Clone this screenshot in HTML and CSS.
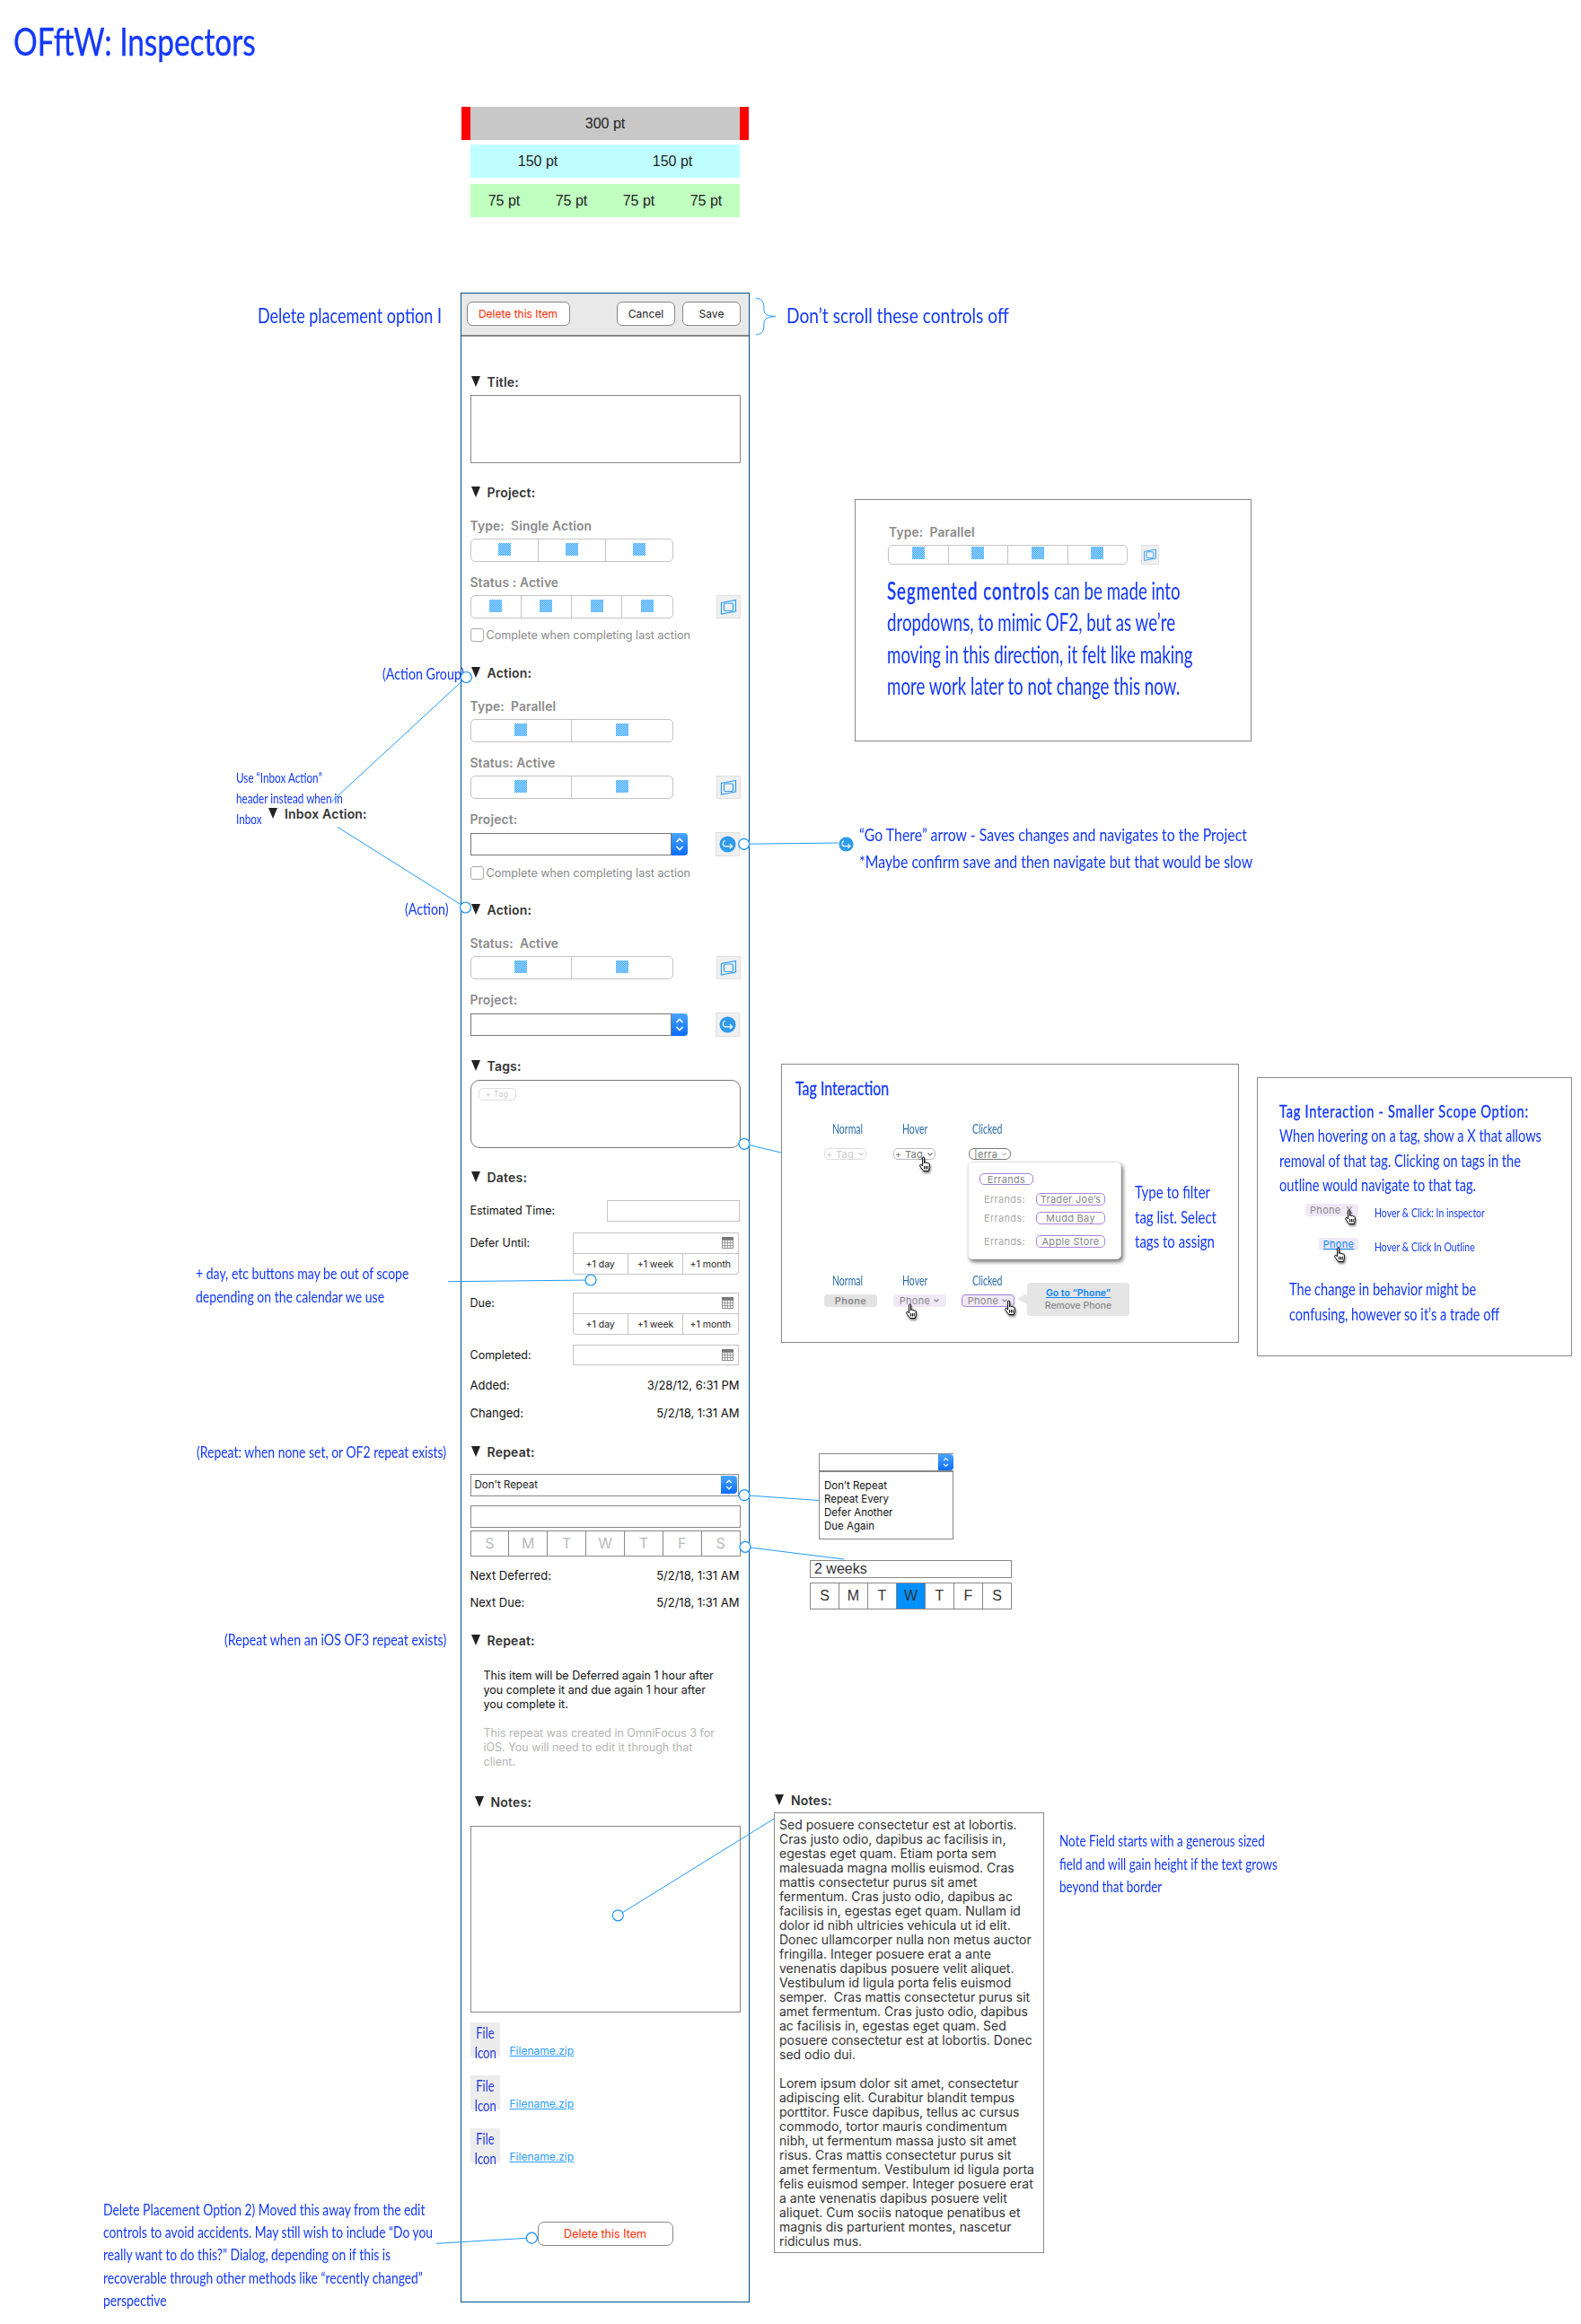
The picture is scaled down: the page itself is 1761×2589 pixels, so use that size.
FILE: index.html
```html
<!DOCTYPE html>
<html lang="en">
<head>
  <meta charset="UTF-8">
  <title>OFftW: Inspectors</title>
  <link rel="stylesheet" href="styles.css">
</head>
<body>
  <svg class="defs" width="0" height="0">
    <symbol id="chevs" viewBox="0 0 18 25">
      <path d="M5.5 10 L9 6.5 L12.5 10 M5.5 15 L9 18.5 L12.5 15" fill="none" stroke="#fff" stroke-width="1.6"/>
    </symbol>
    <symbol id="swap" viewBox="0 0 20 20">
      <path d="M2 5.5 L18 2.5 V15 L2 18 Z" fill="none" stroke="#2c9cf0" stroke-width="1.2"/>
      <rect x="5" y="6" width="10" height="8.5" rx="1.5" fill="none" stroke="#2c9cf0" stroke-width="1.2"/>
    </symbol>
    <symbol id="go" viewBox="0 0 20 20">
      <circle cx="10" cy="10" r="9.5" fill="#2f9bea"/>
      <path d="M7 5.5 C4 6.5 3.5 12 7 12.5 H15.5 M12.5 9.5 L15.5 12.5 L12.5 15" fill="none" stroke="#fff" stroke-width="1.2"/>
    </symbol>
    <symbol id="cal" viewBox="0 0 13 13">
      <rect x="0" y="0" width="13" height="13" fill="#777"/>
      <path d="M.5 3.5 H12.5 V12.5 H.5 Z M.5 6.5 H12.5 M.5 9.5 H12.5 M3.5 3.5 V12.5 M6.5 3.5 V12.5 M9.5 3.5 V12.5" fill="#fff" stroke="#888" stroke-width=".8"/>
    </symbol>
    <symbol id="chev" viewBox="0 0 8 6">
      <path d="M1.5 1.5 L4 4 L6.5 1.5" fill="none" stroke="currentColor" stroke-width="1.1"/>
    </symbol>
    <symbol id="hand" viewBox="0 0 16 19">
      <path d="M5.6 2 C5.6 .6 7.6 .6 7.6 2 V7.6 C7.8 6.6 9.5 6.6 9.6 7.8 C9.8 7 11.3 7 11.4 8.2 C11.7 7.6 13.3 7.8 13.3 9 V12.8 C13.3 14.2 12.6 15 12.3 16.5 H6.6 C6 15 4 13.4 2.8 11.2 C2 9.6 3.6 8.6 4.6 9.8 L5.6 11 Z" fill="#fff" stroke="#000" stroke-width="1"/>
      <path d="M7.6 11 V14.5 M9.4 11 V14.5 M11.2 11 V14.5" stroke="#000" stroke-width="1"/>
    </symbol>
  </svg>

  <div class="canvas">
    <h1 class="hand page-title">OFftW: Inspectors</h1>

    <div class="ruler">
      <div class="ruler-row ruler-300"><span>300 pt</span></div>
      <div class="ruler-row ruler-150"><span>150 pt</span><span>150 pt</span></div>
      <div class="ruler-row ruler-75"><span>75 pt</span><span>75 pt</span><span>75 pt</span><span>75 pt</span></div>
    </div>

    <!-- Inspector panel -->
    <div class="inspector">
      <div class="toolbar">
        <button class="btn btn-delete">Delete this Item</button>
        <button class="btn btn-cancel">Cancel</button>
        <button class="btn btn-save">Save</button>
      </div>

      <div class="head m44"><i class="tri"></i>Title:</div>
      <div class="field title-field m5"></div>

      <div class="head m26"><i class="tri"></i>Project:</div>
      <div class="label m20">Type:  Single Action</div>
      <div class="seg m6"><span><b></b></span><span><b></b></span><span><b></b></span></div>
      <div class="label m15">Status : Active</div>
      <div class="seg-row m6">
        <div class="seg"><span><b></b></span><span><b></b></span><span><b></b></span><span><b></b></span></div>
        <div class="icon-btn"><svg><use href="#swap"/></svg></div>
      </div>
      <div class="check-row m11"><i class="check"></i>Complete when completing last action</div>

      <div class="head m28"><i class="tri"></i>Action:</div>
      <div class="label m20">Type:  Parallel</div>
      <div class="seg m6"><span><b></b></span><span><b></b></span></div>
      <div class="label m15">Status: Active</div>
      <div class="seg-row m6">
        <div class="seg"><span><b></b></span><span><b></b></span></div>
        <div class="icon-btn"><svg><use href="#swap"/></svg></div>
      </div>
      <div class="label m15">Project:</div>
      <div class="seg-row m7">
        <div class="select"><span class="stepper"><svg><use href="#chevs"/></svg></span></div>
        <div class="icon-btn go-btn"><svg><use href="#go"/></svg></div>
      </div>
      <div class="check-row m11"><i class="check"></i>Complete when completing last action</div>

      <div class="head m27"><i class="tri"></i>Action:</div>
      <div class="label m20">Status:  Active</div>
      <div class="seg-row m6">
        <div class="seg"><span><b></b></span><span><b></b></span></div>
        <div class="icon-btn"><svg><use href="#swap"/></svg></div>
      </div>
      <div class="label m15">Project:</div>
      <div class="seg-row m7">
        <div class="select"><span class="stepper"><svg><use href="#chevs"/></svg></span></div>
        <div class="icon-btn go-btn"><svg><use href="#go"/></svg></div>
      </div>

      <div class="head m26"><i class="tri"></i>Tags:</div>
      <div class="tags-field m6"><span class="pill pill-faint pill-small">+ Tag</span></div>

      <div class="head m26"><i class="tri"></i>Dates:</div>
      <div class="date-row m16">
        <span class="date-label">Estimated Time:</span>
        <div class="est-field"></div>
      </div>
      <div class="date-row m12">
        <span class="date-label">Defer Until:</span>
        <div class="date-box">
          <div class="date-input"><svg class="cal"><use href="#cal"/></svg></div>
          <div class="quick"><span>+1 day</span><span>+1 week</span><span>+1 month</span></div>
        </div>
      </div>
      <div class="date-row m20">
        <span class="date-label">Due:</span>
        <div class="date-box">
          <div class="date-input"><svg class="cal"><use href="#cal"/></svg></div>
          <div class="quick"><span>+1 day</span><span>+1 week</span><span>+1 month</span></div>
        </div>
      </div>
      <div class="date-row m11">
        <span class="date-label">Completed:</span>
        <div class="date-box date-single"><svg class="cal"><use href="#cal"/></svg></div>
      </div>
      <div class="info-row m14"><span>Added:</span><span>3/28/12, 6:31 PM</span></div>
      <div class="info-row m15"><span>Changed:</span><span>5/2/18, 1:31 AM</span></div>

      <div class="head m29"><i class="tri"></i>Repeat:</div>
      <div class="select select-full m15">Don't Repeat<span class="stepper"><svg><use href="#chevs"/></svg></span></div>
      <div class="field plain-field m10"></div>
      <div class="days m3"><span>S</span><span>M</span><span>T</span><span>W</span><span>T</span><span>F</span><span>S</span></div>
      <div class="info-row m13"><span>Next Deferred:</span><span>5/2/18, 1:31 AM</span></div>
      <div class="info-row m14"><span>Next Due:</span><span>5/2/18, 1:31 AM</span></div>

      <div class="head m28"><i class="tri"></i>Repeat:</div>
      <p class="repeat-text m22">This item will be Deferred again 1 hour after<br>you complete it and due again 1 hour after<br>you complete it.</p>
      <p class="repeat-text repeat-muted m16">This repeat was created in OmniFocus 3 for<br>iOS. You will need to edit it through that<br>client.</p>

      <div class="head head-notes m30"><i class="tri"></i>Notes:</div>
      <div class="field notes-field m17"></div>
      <div class="attach m11"><div class="file-icon"><span class="hand">File</span><span class="hand">Icon</span></div><a class="file-link">Filename.zip</a></div>
      <div class="attach m21"><div class="file-icon"><span class="hand">File</span><span class="hand">Icon</span></div><a class="file-link">Filename.zip</a></div>
      <div class="attach m21"><div class="file-icon"><span class="hand">File</span><span class="hand">Icon</span></div><a class="file-link">Filename.zip</a></div>
      <button class="btn btn-delete btn-bottom">Delete this Item</button>
    </div>

    <!-- Side notes -->
    <div class="hand note n-delete1">Delete placement option I</div>
    <div class="hand note n-scroll">Don’t scroll these controls off</div>
    <div class="hand note n-group">(Action Group)</div>
    <div class="hand note n-inbox">Use “Inbox Action”<br>header instead when in<br>Inbox</div>
    <div class="head inbox-head"><i class="tri"></i>Inbox Action:</div>
    <div class="hand note n-action">(Action)</div>
    <div class="hand note n-day">+ day, etc buttons may be out of scope<br>depending on the calendar we use</div>
    <div class="hand note n-repeat1">(Repeat: when none set, or OF2 repeat exists)</div>
    <div class="hand note n-repeat2">(Repeat when an iOS OF3 repeat exists)</div>
    <div class="hand note n-delete2">Delete Placement Option 2) Moved this away from the edit<br>controls to avoid accidents. May still wish to include “Do you<br>really want to do this?” Dialog, depending on if this is<br>recoverable through other methods like “recently changed”<br>perspective</div>
    <svg class="go-there"><use href="#go"/></svg>
    <div class="hand note n-go">“Go There” arrow - Saves changes and navigates to the Project<br>*Maybe confirm save and then navigate but that would be slow</div>
    <div class="hand note n-field">Note Field starts with a generous sized<br>field and will gain height if the text grows<br>beyond that border</div>

    <!-- Segmented controls box -->
    <div class="box seg-box">
      <div class="label">Type:  Parallel</div>
      <div class="seg-row seg-row-wide">
        <div class="seg"><span><b></b></span><span><b></b></span><span><b></b></span><span><b></b></span></div>
        <div class="icon-btn"><svg><use href="#swap"/></svg></div>
      </div>
      <p class="hand seg-note"><strong>Segmented controls</strong> can be made into<br>dropdowns, to mimic OF2, but as we’re<br>moving in this direction, it felt like making<br>more work later to not change this now.</p>
    </div>

    <!-- Tag interaction box -->
    <div class="box tag-box">
      <h3 class="hand tag-title">Tag Interaction</h3>
      <div class="state-row state-row-1"><span class="hand">Normal</span><span class="hand">Hover</span><span class="hand">Clicked</span></div>
      <div class="tag-row">
        <span class="pill pill-faint">+ Tag <svg class="chev"><use href="#chev"/></svg></span>
        <span class="pill pill-hover">+ Tag <svg class="chev"><use href="#chev"/></svg></span>
        <span class="pill pill-typing">|erra <svg class="chev"><use href="#chev"/></svg></span>
      </div>
      <div class="popup-row">
        <div class="popup">
          <span class="pill pill-purple pill-errands">Errands</span>
          <div class="popup-line first"><span class="popup-label">Errands:</span><span class="pill pill-purple">Trader Joe’s</span></div>
          <div class="popup-line"><span class="popup-label">Errands:</span><span class="pill pill-purple">Mudd Bay</span></div>
          <div class="popup-line last"><span class="popup-label">Errands:</span><span class="pill pill-purple">Apple Store</span></div>
        </div>
        <div class="hand filter-note">Type to filter<br>tag list. Select<br>tags to assign</div>
      </div>
      <div class="state-row state-row-2"><span class="hand">Normal</span><span class="hand">Hover</span><span class="hand">Clicked</span></div>
      <div class="phone-row">
        <span class="phone phone-normal">Phone</span>
        <span class="phone phone-hover">Phone <svg class="chev"><use href="#chev"/></svg></span>
        <span class="phone phone-clicked">Phone <svg class="chev"><use href="#chev"/></svg></span>
        <div class="tip"><a>Go to “Phone”</a><span>Remove Phone</span></div>
      </div>
    </div>

    <!-- Smaller scope box -->
    <div class="box scope-box">
      <div class="hand scope-text"><strong>Tag Interaction - Smaller Scope Option:</strong><br>When hovering on a tag, show a X that allows<br>removal of that tag. Clicking on tags in the<br>outline would navigate to that tag.</div>
      <div class="scope-row scope-row-1"><span class="phone phone-x"><span>Phone</span><span>X</span></span><span class="hand">Hover &amp; Click: In inspector</span></div>
      <div class="scope-row scope-row-2"><span class="phone phone-link"><a>Phone</a></span><span class="hand">Hover &amp; Click In Outline</span></div>
      <div class="hand scope-foot">The change in behavior might be<br>confusing, however so it’s a trade off</div>
    </div>

    <!-- Repeat popups -->
    <div class="mini-select"><span class="stepper"><svg><use href="#chevs"/></svg></span></div>
    <div class="mini-list">Don’t Repeat<br>Repeat Every<br>Defer Another<br>Due Again</div>
    <div class="weeks">2 weeks</div>
    <div class="week-days"><span>S</span><span>M</span><span>T</span><span class="on">W</span><span>T</span><span>F</span><span>S</span></div>

    <!-- Notes with text -->
    <div class="head notes-head"><i class="tri"></i>Notes:</div>
    <div class="notes-text">Sed posuere consectetur est at lobortis.
Cras justo odio, dapibus ac facilisis in,
egestas eget quam. Etiam porta sem
malesuada magna mollis euismod. Cras
mattis consectetur purus sit amet
fermentum. Cras justo odio, dapibus ac
facilisis in, egestas eget quam. Nullam id
dolor id nibh ultricies vehicula ut id elit.
Donec ullamcorper nulla non metus auctor
fringilla. Integer posuere erat a ante
venenatis dapibus posuere velit aliquet.
Vestibulum id ligula porta felis euismod
semper.  Cras mattis consectetur purus sit
amet fermentum. Cras justo odio, dapibus
ac facilisis in, egestas eget quam. Sed
posuere consectetur est at lobortis. Donec
sed odio dui.

Lorem ipsum dolor sit amet, consectetur
adipiscing elit. Curabitur blandit tempus
porttitor. Fusce dapibus, tellus ac cursus
commodo, tortor mauris condimentum
nibh, ut fermentum massa justo sit amet
risus. Cras mattis consectetur purus sit
amet fermentum. Vestibulum id ligula porta
felis euismod semper. Integer posuere erat
a ante venenatis dapibus posuere velit
aliquet. Cum sociis natoque penatibus et
magnis dis parturient montes, nascetur
ridiculus mus.</div>

    <!-- Connector lines -->
    <svg class="wires" viewBox="0 0 1761 2589">
      <path d="M842 332 C850 333 851 338 851 345 C851 350 854 352 864 352.5 C854 353 851 356 851 360 C851 368 850 372 842 373"/>
      <path d="M519.3 754.5 L368.6 893.7"/>
      <path d="M375.8 921.3 L518.5 1011"/>
      <path d="M828.7 940.3 L934 939"/>
      <path d="M829 1274.3 L870 1284"/>
      <path d="M499 1427.7 L658 1426"/>
      <path d="M829 1665.7 L912 1671.5"/>
      <path d="M830 1723.3 L940 1737"/>
      <path d="M688.3 2133.8 L862.3 2026"/>
      <path d="M486 2499.3 L592 2493"/>
      <ellipse cx="519.3" cy="754.5" rx="6" ry="6"/>
      <ellipse cx="518.5" cy="1011" rx="6" ry="6"/>
      <ellipse cx="828.7" cy="940.3" rx="6" ry="6"/>
      <ellipse cx="829" cy="1274.3" rx="6" ry="6"/>
      <ellipse cx="658" cy="1426" rx="6" ry="6"/>
      <ellipse cx="829" cy="1665.7" rx="6" ry="6"/>
      <ellipse cx="830" cy="1723.3" rx="6" ry="6"/>
      <ellipse cx="688.3" cy="2133.8" rx="6" ry="6"/>
      <ellipse cx="592.3" cy="2493.2" rx="6" ry="6"/>
    </svg>

    <!-- Hand cursors -->
    <svg class="hand-cur cur-1"><use href="#hand"/></svg>
    <svg class="hand-cur cur-2"><use href="#hand"/></svg>
    <svg class="hand-cur cur-3"><use href="#hand"/></svg>
    <svg class="hand-cur cur-4"><use href="#hand"/></svg>
    <svg class="hand-cur cur-5"><use href="#hand"/></svg>
  </div>
</body>
</html>
```

FILE: styles.css
```css
* {
  box-sizing: border-box;
}
body {
  margin: 0;
  background-color: #fff;
  font-family: Inter, "Liberation Sans", sans-serif;
  color: #222;
}
.defs {
  position: absolute;
}
.canvas {
  position: relative;
  width: 1761px;
  height: 2589px;
  overflow: hidden;
}
p, h1, h3 {
  margin: 0;
  font-weight: normal;
}

/* hand written annotations: no script font here, so a squeezed Lato stands in */
.hand {
  font-family: Lato, "Liberation Sans", sans-serif;
  color: #1338ff;
  white-space: nowrap;
  transform-origin: left center;
}
.note {
  position: absolute;
}
.page-title {
  position: absolute;
  left: 15px;
  top: 23px;
  font-size: 43px;
  line-height: 46px;
  -webkit-text-stroke: 0.4px #1338ff;
  transform: scaleX(0.775);
}
.n-delete1 { left: 287px; top: 337px; font-size: 24px; line-height: 28px; transform: scaleX(0.75); }
.n-scroll { left: 876px; top: 337px; font-size: 24px; line-height: 28px; transform: scaleX(0.8); }
.n-group { left: 426px; top: 741px; font-size: 17px; line-height: 20px; transform: scaleX(0.84); }
.n-inbox { left: 263px; top: 855px; font-size: 15px; line-height: 22.8px; transform: scaleX(0.78); }
.n-action { left: 451px; top: 1003px; font-size: 17px; line-height: 20px; transform: scaleX(0.84); }
.n-day { left: 218px; top: 1405px; font-size: 18px; line-height: 26px; transform: scaleX(0.78); }
.n-repeat1 { left: 219px; top: 1604px; font-size: 18px; line-height: 26px; transform: scaleX(0.775); }
.n-repeat2 { left: 250px; top: 1813px; font-size: 18px; line-height: 26px; transform: scaleX(0.79); }
.n-delete2 { left: 115px; top: 2449px; font-size: 18px; line-height: 25.2px; transform: scaleX(0.77); }
.n-go { left: 957px; top: 915px; font-size: 19px; line-height: 30px; transform: scaleX(0.835); }
.n-field { left: 1180px; top: 2038px; font-size: 18px; line-height: 25.7px; transform: scaleX(0.75); }
.go-there {
  position: absolute;
  left: 934px;
  top: 932px;
  width: 17px;
  height: 17px;
}

/* widths ruler */
.ruler {
  position: absolute;
  left: 514px;
  top: 119px;
  width: 320px;
  font-family: "Liberation Sans", Arial, sans-serif;
  font-size: 16px;
}
.ruler-row {
  display: flex;
  height: 37px;
  align-items: center;
  text-align: center;
}
.ruler-row span {
  flex: 1;
}
.ruler-300 {
  background-color: #c8c8c8;
  border-left: 10px solid #ff0000;
  border-right: 10px solid #ff0000;
}
.ruler-150 {
  margin: 5px 10px 0;
  background-color: #bfffff;
}
.ruler-75 {
  margin: 7px 10px 0;
  background-color: #bfffbf;
}

/* spacing helpers */
.m3 { margin-top: 3px; }
.m5 { margin-top: 5px; }
.m6 { margin-top: 6px; }
.m7 { margin-top: 7px; }
.m10 { margin-top: 10px; }
.m11 { margin-top: 11px; }
.m12 { margin-top: 12px; }
.m13 { margin-top: 13px; }
.m14 { margin-top: 14px; }
.m15 { margin-top: 15px; }
.m16 { margin-top: 16px; }
.m17 { margin-top: 17px; }
.m20 { margin-top: 20px; }
.m21 { margin-top: 21px; }
.m22 { margin-top: 22px; }
.m26 { margin-top: 26px; }
.m27 { margin-top: 27px; }
.m28 { margin-top: 28px; }
.m29 { margin-top: 29px; }
.m30 { margin-top: 30px; }
.m44 { margin-top: 44px; }

/* inspector */
.inspector {
  position: absolute;
  left: 513px;
  top: 325.5px;
  width: 322px;
  height: 2239.5px;
  padding: 0 9.5px;
  border: 1.5px solid #00528f;
  font-size: 12.5px;
}
.toolbar {
  display: flex;
  align-items: center;
  height: 48px;
  margin: 0 -9.5px;
  padding: 0 9px 0 5.5px;
  background-color: #e9e9e9;
  border-bottom: 2px solid #888;
}
.btn {
  height: 27px;
  padding: 0;
  background-color: #fff;
  border: 1px solid #888;
  border-radius: 6px;
  font-family: inherit;
  font-size: 12px;
  color: #222;
}
.btn-delete {
  width: 115px;
  color: #ff2a00;
}
.btn-cancel {
  width: 65px;
  margin-left: auto;
}
.btn-save {
  width: 65px;
  margin-left: 8px;
}
.btn-bottom {
  display: block;
  width: 151px;
  margin: 66px 0 0 75px;
  border-radius: 7px;
  font-size: 12.5px;
}
.head {
  display: flex;
  align-items: center;
  height: 16px;
  padding-bottom: 2px;
  font-size: 14px;
  font-weight: 600;
  letter-spacing: 0.2px;
  color: #333;
  white-space: nowrap;
}
.tri {
  width: 0;
  height: 0;
  margin: -1px 8px 0 1px;
  border-top: 12px solid #222;
  border-left: 5.5px solid transparent;
  border-right: 5.5px solid transparent;
}
.head-notes {
  margin-left: 4px;
}
.inbox-head {
  position: absolute;
  left: 298px;
  top: 899px;
}
.notes-head {
  position: absolute;
  left: 862px;
  top: 1998px;
}
.label {
  height: 16px;
  font-size: 13.8px;
  line-height: 16px;
  font-weight: 600;
  letter-spacing: 0.15px;
  color: #8a8a8a;
  white-space: pre;
}
.field {
  border: 1.5px solid #888;
  background-color: #fff;
}
.title-field {
  height: 76px;
}
.plain-field {
  height: 25px;
}
.notes-field {
  height: 208px;
}
.seg {
  display: flex;
  width: 226px;
  height: 26px;
  background-color: #fff;
  border: 1px solid #c4c4c4;
  border-radius: 5px;
}
.seg span {
  flex: 1;
  display: flex;
  justify-content: center;
  padding-top: 4px;
  border-left: 1px solid #c4c4c4;
}
.seg span:first-child {
  border-left: none;
}
.seg b {
  width: 14px;
  height: 14px;
  background: repeating-conic-gradient(#3ba6ff 0 25%, #a8daff 0 50%) 0 0 / 2px 2px;
}
.seg-row {
  display: flex;
  align-items: flex-start;
  justify-content: space-between;
}
.icon-btn {
  width: 27px;
  height: 26px;
  padding: 2px;
  background-color: #f0f0f0;
  border: 1px solid #e0e0e0;
}
.icon-btn svg {
  display: block;
  width: 100%;
  height: 100%;
}
.go-btn {
  width: 27px;
  height: 27px;
  margin-top: -1px;
  margin-right: 1px;
  padding: 3px;
}
.check-row {
  display: flex;
  align-items: center;
  height: 15px;
  font-size: 12.6px;
  color: #8a8a8a;
  white-space: nowrap;
}
.check {
  width: 15px;
  height: 15px;
  margin-right: 3px;
  border: 1px solid #aaa;
  border-radius: 3px;
}
.select {
  display: flex;
  justify-content: flex-end;
  width: 224px;
  height: 25px;
  background-color: #fff;
  border: 1px solid #777;
  position: relative;
}
.stepper {
  display: block;
  flex: none;
  width: 18px;
  background: linear-gradient(#4aa5ff, #0a6cff);
  border-radius: 0 4px 4px 0;
}
.stepper svg {
  display: block;
  width: 100%;
  height: 100%;
}
.seg-row .select .stepper {
  margin: -1px -19px -1px 0;
}
.select-full {
  width: 299px;
  align-items: center;
  justify-content: space-between;
  padding: 1px 1px 1px 4px;
  border-width: 1.5px;
  border-color: #888;
  font-size: 11.5px;
}
.select-full .stepper {
  height: 20px;
}
.tags-field {
  height: 76px;
  padding: 8px;
  border: 1px solid #777;
  border-radius: 10px;
}
.pill {
  display: inline-flex;
  align-items: center;
  justify-content: center;
  gap: 4px;
  height: 13px;
  padding: 0 5px;
  border: 1px solid #bbb;
  border-radius: 5px;
  font-size: 11px;
  letter-spacing: 0.3px;
  white-space: nowrap;
}
.pill-faint {
  border-color: #ddd;
  color: #ccc;
}
.pill-small {
  display: flex;
  width: 42px;
  height: 14px;
  font-size: 9px;
}
.chev {
  width: 8px;
  height: 6px;
}
.date-row {
  display: flex;
  align-items: flex-start;
  justify-content: space-between;
}
.date-label {
  line-height: 23px;
  color: #111;
}
.est-field {
  width: 148px;
  height: 24px;
  margin-right: 1px;
  border: 1px solid #c4c4c4;
}
.date-box {
  width: 185px;
  margin-right: 2px;
  border: 1.5px solid #c4c4c4;
  border-radius: 0 0 3px 3px;
}
.date-input {
  display: flex;
  justify-content: flex-end;
  align-items: center;
  height: 23px;
  padding-right: 5px;
  border-bottom: 1.5px solid #c4c4c4;
}
.cal {
  display: block;
  width: 13px;
  height: 13px;
}
.quick {
  display: flex;
  height: 22px;
  font-size: 10.5px;
  line-height: 21px;
  text-align: center;
  color: #222;
}
.quick span {
  flex: 1;
  padding-top: 1px;
  border-left: 1.5px solid #c4c4c4;
}
.quick span:first-child {
  border-left: none;
}
.date-single {
  display: flex;
  justify-content: flex-end;
  align-items: center;
  height: 23px;
  padding-right: 5px;
  border-radius: 0;
}
.info-row {
  display: flex;
  justify-content: space-between;
  height: 16px;
  padding-right: 1px;
  font-size: 13px;
  line-height: 16px;
  color: #111;
}
.days {
  display: flex;
  height: 29px;
  border: 1.5px solid #888;
}
.days span {
  flex: 1;
  border-left: 1.5px solid #888;
  font-size: 16px;
  line-height: 26px;
  text-align: center;
  color: #bbb;
}
.days span:first-child {
  border-left: none;
}
.repeat-text {
  margin-left: 15px;
  font-size: 12.5px;
  line-height: 16px;
  color: #111;
  white-space: nowrap;
}
.repeat-muted {
  color: #b4b4b4;
}
.attach {
  display: flex;
  align-items: flex-end;
  gap: 11px;
  height: 38px;
}
.file-icon {
  width: 33px;
  height: 38px;
  background-color: #ececec;
}
.file-icon .hand {
  display: block;
  height: 22px;
  font-size: 18px;
  line-height: 22px;
  text-align: center;
  color: #2438e0;
  transform-origin: center;
  transform: scaleX(0.73);
}
.file-link {
  font-size: 12px;
  line-height: 14px;
  margin-bottom: -1px;
  color: #2a9dff;
  text-decoration: underline;
}

/* outlined boxes on the right */
.box {
  position: absolute;
  background-color: #fff;
  border: 1.5px solid #888;
}
.seg-box {
  left: 952px;
  top: 556px;
  width: 442px;
  height: 270px;
  padding: 28px 0 0 37px;
}
.seg-row-wide {
  justify-content: flex-start;
  margin: 6px 0 0 -1px;
}
.seg-row-wide .seg {
  width: 267px;
  height: 22px;
}
.seg-row-wide .seg span {
  padding-top: 1px;
}
.seg-row-wide .icon-btn {
  width: 20px;
  height: 22px;
  margin-left: 15px;
  padding: 1px;
}
.seg-note {
  margin: 12px 0 0 -2px;
  font-size: 26px;
  line-height: 35.3px;
  transform: scaleX(0.72);
}
.seg-note strong {
  -webkit-text-stroke: 0.5px #1338ff;
  font-weight: normal;
  letter-spacing: 1.4px;
}
.tag-box {
  left: 870px;
  top: 1185px;
  width: 510px;
  height: 311px;
  padding-left: 15px;
  color: #888;
}
.tag-title {
  margin-top: 13px;
  font-size: 21px;
  line-height: 26px;
  -webkit-text-stroke: 0.3px #1338ff;
  transform: scaleX(0.76);
}
.state-row {
  display: flex;
  margin-left: 41px;
  height: 16px;
  line-height: 16px;
}
.state-row .hand {
  width: 78px;
  font-size: 15px;
  color: #2a6ca8;
  transform: scaleX(0.7);
}
.state-row-1 {
  margin-top: 24px;
}
.state-row-2 {
  margin-top: 15px;
}
.tag-row {
  display: flex;
  margin: 14px 0 0 32px;
}
.tag-row .pill {
  width: 47px;
  margin-right: 30px;
  padding: 0;
}
.tag-row .pill-hover {
  color: #777;
  margin-right: 37px;
}
.tag-row .pill-typing {
  border-color: #777;
  color: #777;
  border-radius: 6px;
  justify-content: space-between;
  padding: 0 3px 0 5px;
}
.popup-row {
  display: flex;
  align-items: flex-start;
  margin: 2px 0 0 192px;
}
.popup {
  flex: none;
  width: 171px;
  height: 109px;
  padding: 12px 0 0 12px;
  background-color: #fff;
  border: 1px solid #e4e4e4;
  border-radius: 5px;
  box-shadow: 2px 3px 4px #777;
}
.pill-purple {
  border-color: #a385d8;
  color: #888;
}
.pill-errands {
  display: flex;
  width: 60px;
}
.popup-line {
  display: flex;
  align-items: center;
  justify-content: space-between;
  width: 140px;
  margin-top: 7px;
}
.popup-line.first {
  margin-top: 9px;
}
.popup-line.last {
  margin-top: 12px;
}
.popup-line .pill {
  width: 77px;
  height: 14px;
  padding: 0;
}
.popup-label {
  margin-left: 5px;
  font-size: 11px;
  letter-spacing: 0.3px;
  color: #aaa;
}
.filter-note {
  margin: 20px 0 0 15px;
  font-size: 19px;
  line-height: 27.5px;
  transform: scaleX(0.79);
}
.phone-row {
  display: flex;
  align-items: center;
  height: 14px;
  margin: 8px 0 0 32px;
  position: relative;
}
.phone {
  display: inline-flex;
  align-items: center;
  justify-content: center;
  gap: 3px;
  width: 59px;
  height: 14px;
  border-radius: 4px;
  font-size: 11px;
  letter-spacing: 0.3px;
  color: #888;
}
.phone-normal {
  background-color: #e3e3e3;
  font-weight: 600;
  margin-right: 18px;
}
.phone-hover {
  background-color: #efe8f7;
  margin-right: 17px;
}
.phone-clicked {
  background-color: #efe8f7;
  border: 1px solid #a385d8;
}
.tip {
  position: absolute;
  left: 226px;
  top: -13px;
  display: flex;
  flex-direction: column;
  align-items: center;
  width: 114px;
  height: 37px;
  padding-top: 5px;
  background-color: #e5e5e5;
  border-radius: 4px;
  font-size: 10.5px;
  line-height: 14px;
  color: #777;
}
.tip::before {
  content: "";
  position: absolute;
  left: -11px;
  top: 12px;
  border-right: 11px solid #e5e5e5;
  border-top: 6px solid transparent;
  border-bottom: 6px solid transparent;
}
.tip a {
  color: #0a84ff;
  font-weight: 600;
  text-decoration: underline;
}
.scope-box {
  left: 1400px;
  top: 1200px;
  width: 351px;
  height: 311px;
  padding-left: 24px;
}
.scope-text {
  margin-top: 23px;
  font-size: 20px;
  line-height: 27.3px;
  transform: scaleX(0.73);
}
.scope-text strong {
  font-weight: normal;
  letter-spacing: 1px;
  -webkit-text-stroke: 0.4px #1338ff;
}
.scope-row {
  display: flex;
  align-items: center;
  height: 14px;
}
.scope-row .hand {
  position: relative;
  top: 2px;
  font-size: 14px;
  margin-left: 18px;
  transform: scaleX(0.75);
}
.scope-row-1 {
  margin-top: 8px;
}
.scope-row-2 {
  margin-top: 24px;
  padding-left: 44px;
}
.scope-row-1 .phone {
  margin-left: 29px;
}
.phone-x {
  justify-content: space-between;
  padding: 0 6px 0 5px;
  background-color: #efe8f7;
}
.phone-link {
  background-color: #efe8f7;
  width: 44px;
}
.phone-link a {
  color: #0a84ff;
  text-decoration: underline;
}
.scope-foot {
  margin: 29px 0 0 11px;
  font-size: 20px;
  line-height: 27.6px;
  transform: scaleX(0.73);
}

/* repeat popups */
.mini-select {
  position: absolute;
  left: 912px;
  top: 1619px;
  display: flex;
  justify-content: flex-end;
  width: 150px;
  height: 20px;
  border: 1px solid #888;
  border-right: none;
}
.mini-select .stepper {
  width: 17px;
}
.mini-list {
  position: absolute;
  left: 912px;
  top: 1639px;
  width: 150px;
  height: 76px;
  padding: 8px 0 0 5px;
  border: 1px solid #888;
  font-size: 11.5px;
  line-height: 15px;
  color: #111;
}
.weeks {
  position: absolute;
  left: 902px;
  top: 1738px;
  width: 225px;
  height: 20px;
  padding-left: 4px;
  border: 1px solid #888;
  font-family: "Liberation Sans", Arial, sans-serif;
  font-size: 16px;
  line-height: 18px;
  color: #333;
}
.week-days {
  position: absolute;
  left: 902px;
  top: 1763px;
  display: flex;
  width: 225px;
  height: 30px;
  border: 1px solid #888;
}
.week-days span {
  flex: 1;
  border-left: 1px solid #888;
  font-family: "Liberation Sans", Arial, sans-serif;
  font-size: 16px;
  line-height: 28px;
  text-align: center;
  color: #333;
}
.week-days span:first-child {
  border-left: none;
}
.week-days .on {
  background-color: #0090ff;
}

.notes-text {
  position: absolute;
  left: 862px;
  top: 2019px;
  width: 301px;
  height: 491px;
  padding: 5px 0 0 5px;
  border: 1px solid #888;
  font-size: 14px;
  line-height: 16px;
  color: #333;
  white-space: pre;
}

/* overlays */
.wires {
  position: absolute;
  left: 0;
  top: 0;
  width: 1761px;
  height: 2589px;
  pointer-events: none;
}
.wires path {
  fill: none;
  stroke: #1f9bff;
  stroke-width: 1;
}
.wires ellipse {
  fill: #fff;
  stroke: #1591ff;
  stroke-width: 1.2;
}
.hand-cur {
  position: absolute;
  width: 16px;
  height: 19px;
  filter: drop-shadow(1px 2px 1px rgba(0, 0, 0, 0.5));
}
.cur-1 { left: 1022px; top: 1288px; }
.cur-2 { left: 1007px; top: 1452px; }
.cur-3 { left: 1117px; top: 1448px; }
.cur-4 { left: 1496px; top: 1347px; }
.cur-5 { left: 1484px; top: 1389px; }
```
